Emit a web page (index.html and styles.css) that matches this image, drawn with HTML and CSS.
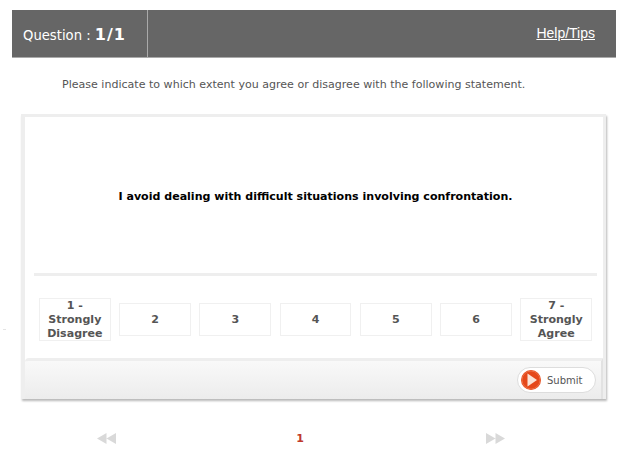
FILE: index.html
```html
<!DOCTYPE html>
<html lang="en">
<head>
    <meta charset="UTF-8">
    <meta name="viewport" content="width=device-width, initial-scale=1.0">
    <title>Question</title>
    <link rel="stylesheet" href="styles.css">
</head>
<body>
    <span class="stray-mark"></span>
    <div class="container">
        <div class="header">
            <div class="question-count">Question : <strong>1/1</strong></div>
            <a class="help-link" href="#">Help/Tips</a>
        </div>
        <p class="instruction">Please indicate to which extent you agree or disagree with the following statement.</p>
        <div class="card">
            <div class="statement">I avoid dealing with difficult situations involving confrontation.</div>
            <div class="options">
                <div class="option">1 - Strongly Disagree</div>
                <div class="option">2</div>
                <div class="option">3</div>
                <div class="option">4</div>
                <div class="option">5</div>
                <div class="option">6</div>
                <div class="option">7 - Strongly Agree</div>
            </div>
            <div class="card-footer">
                <button class="submit-button">
                    <svg class="play-icon" width="20" height="20" viewBox="0 0 20 20">
                        <circle cx="10" cy="10" r="10" fill="#e5481a"/>
                        <circle cx="10" cy="10" r="9" fill="none" stroke="#ef7a4e" stroke-width="0.8"/>
                        <path d="M6.5 3.5 L16 10 L6.5 16.5 Z" fill="#fbe3d6"/>
                    </svg>
                    Submit
                </button>
            </div>
        </div>
        <div class="pager">
            <svg width="19" height="11" viewBox="0 0 19 11"><path d="M9.5 0 V11 L0 5.5 Z M19 0 V11 L9.5 5.5 Z" fill="#d9d9d9"/></svg>
            <span class="page-number">1</span>
            <svg width="19" height="11" viewBox="0 0 19 11"><path d="M0 0 V11 L9.5 5.5 Z M9.5 0 V11 L19 5.5 Z" fill="#d9d9d9"/></svg>
        </div>
    </div>
</body>
</html>
```

FILE: styles.css
```css
html, body {
    height: 475px;
    overflow: hidden;
}
body {
    font-family: "DejaVu Sans", Verdana, sans-serif;
    font-size: 11.05px;
    margin: 0;
    padding: 0;
    background-color: #fff;
    color: #555;
}
.container {
    width: 604px;
    margin-left: 12px;
    padding-top: 10px;
}
.stray-mark {
    position: absolute;
    left: 3px;
    top: 329px;
    width: 3px;
    height: 1px;
    background-color: #e4e4e4;
}
.header {
    display: flex;
    justify-content: space-between;
    align-items: center;
    height: 47px;
    background-color: #666;
    border-bottom: 1px solid #aaa;
    color: #fff;
}
.question-count {
    width: 124px;
    height: 47px;
    line-height: 49px;
    padding-left: 11px;
    border-right: 1px solid #aaa;
    font-size: 13.2px;
}
.question-count strong {
    font-size: 16px;
    letter-spacing: 1px;
}
.help-link {
    margin-right: 21px;
    margin-top: -2px;
    color: #fff;
    font-family: "Liberation Sans", Arial, sans-serif;
    font-size: 14px;
}
.instruction {
    margin: 20px 0 22px 50px;
    line-height: 14px;
}
.card {
    width: 585px;
    margin-left: 9px;
    box-sizing: border-box;
    border: 3px solid #eee;
    border-left-width: 4px;
    border-bottom: none;
    box-shadow: 1px 2px 2px rgba(0, 0, 0, 0.28);
}
.statement {
    display: flex;
    align-items: center;
    justify-content: center;
    height: 154px;
    margin: 0 6px 0 9px;
    padding-top: 2px;
    border-bottom: 3px solid #eee;
    color: #000;
    font-weight: bold;
}
.options {
    display: flex;
    align-items: center;
    gap: 8.6px;
    height: 77px;
    padding: 5px 11px 0 14px;
}
.option {
    display: flex;
    align-items: center;
    justify-content: center;
    flex: 1;
    min-height: 33px;
    max-height: 43px;
    box-sizing: border-box;
    border: 1px solid #f0f0f0;
    color: #555;
    font-weight: bold;
    line-height: 14px;
    text-align: center;
}
.card-footer {
    display: flex;
    align-items: center;
    justify-content: flex-end;
    height: 38px;
    padding-right: 5px;
    border-top: 3px solid #eee;
    border-right: 2px solid #e2e2e2;
    border-top-left-radius: 4px;
    background: linear-gradient(#f9f9f9, #ececec);
}
.submit-button {
    display: flex;
    align-items: center;
    gap: 6px;
    width: 79px;
    height: 26px;
    padding: 0 0 0 3px;
    background-color: #fff;
    border: 1px solid #ddd;
    border-radius: 13px;
    color: #555;
    font-family: inherit;
    font-size: 10px;
}
.pager {
    display: flex;
    justify-content: space-between;
    align-items: center;
    margin: 33px 111px 0 85px;
}
.page-number {
    color: #c0392b;
    font-size: 11px;
    font-weight: bold;
    margin-right: 2px;
}
```
